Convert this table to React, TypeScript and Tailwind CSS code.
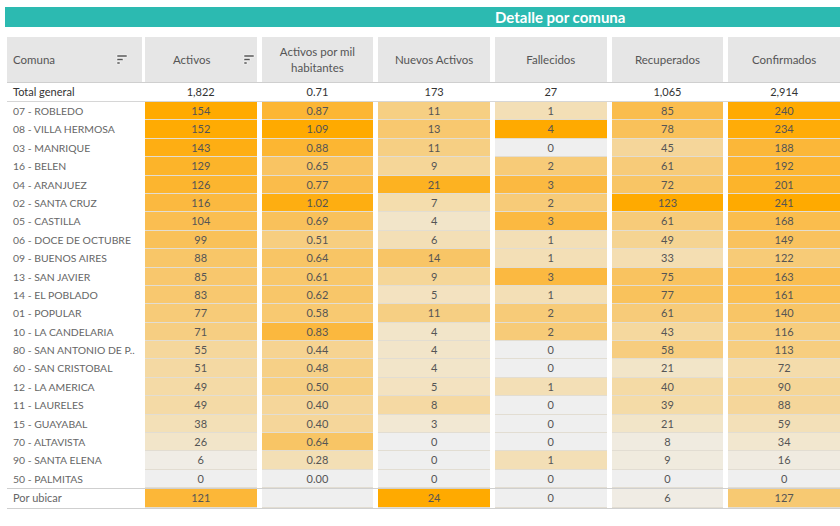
import React from "react";

type Row = { name: string; v: (number | null)[] };

const rows: Row[] = [
  { name: "07 - ROBLEDO", v: [154, 0.87, 11, 1, 85, 240] },
  { name: "08 - VILLA HERMOSA", v: [152, 1.09, 13, 4, 78, 234] },
  { name: "03 - MANRIQUE", v: [143, 0.88, 11, 0, 45, 188] },
  { name: "16 - BELEN", v: [129, 0.65, 9, 2, 61, 192] },
  { name: "04 - ARANJUEZ", v: [126, 0.77, 21, 3, 72, 201] },
  { name: "02 - SANTA CRUZ", v: [116, 1.02, 7, 2, 123, 241] },
  { name: "05 - CASTILLA", v: [104, 0.69, 4, 3, 61, 168] },
  { name: "06 - DOCE DE OCTUBRE", v: [99, 0.51, 6, 1, 49, 149] },
  { name: "09 - BUENOS AIRES", v: [88, 0.64, 14, 1, 33, 122] },
  { name: "13 - SAN JAVIER", v: [85, 0.61, 9, 3, 75, 163] },
  { name: "14 - EL POBLADO", v: [83, 0.62, 5, 1, 77, 161] },
  { name: "01 - POPULAR", v: [77, 0.58, 11, 2, 61, 140] },
  { name: "10 - LA CANDELARIA", v: [71, 0.83, 4, 2, 43, 116] },
  { name: "80 - SAN ANTONIO DE P..", v: [55, 0.44, 4, 0, 58, 113] },
  { name: "60 - SAN CRISTOBAL", v: [51, 0.48, 4, 0, 21, 72] },
  { name: "12 - LA AMERICA", v: [49, 0.5, 5, 1, 40, 90] },
  { name: "11 - LAURELES", v: [49, 0.4, 8, 0, 39, 88] },
  { name: "15 - GUAYABAL", v: [38, 0.4, 3, 0, 21, 59] },
  { name: "70 - ALTAVISTA", v: [26, 0.64, 0, 0, 8, 34] },
  { name: "90 - SANTA ELENA", v: [6, 0.28, 0, 1, 9, 16] },
  { name: "50 - PALMITAS", v: [0, 0, 0, 0, 0, 0] },
];

const porUbicar: Row = { name: "Por ubicar", v: [121, null, 24, 0, 6, 127] };
const totals = ["1,822", "0.71", "173", "27", "1,065", "2,914"];
const maxes = [154, 1.09, 24, 4, 123, 241];

// orange-gold ramp, light gray at 0
const stops: [number, number[]][] = [
  [0, [0xef, 0xef, 0xef]],
  [0.15, [0xf2, 0xe6, 0xcd]],
  [0.3, [0xf4, 0xdc, 0xab]],
  [0.5, [0xf7, 0xcb, 0x78]],
  [0.75, [0xfb, 0xb9, 0x41]],
  [1, [0xff, 0xaa, 0x00]],
];

const heat = (t: number) => {
  for (let i = 1; i < stops.length; i++) {
    const [t1, c1] = stops[i];
    const [t0, c0] = stops[i - 1];
    if (t <= t1) {
      const k = (t - t0) / (t1 - t0);
      const c = c0.map((x, j) => Math.round(x + (c1[j] - x) * k));
      return `rgb(${c[0]},${c[1]},${c[2]})`;
    }
  }
  return "#ffaa00";
};

const fmt = (v: number | null, col: number) => {
  if (v === null) return "";
  return col === 1 ? v.toFixed(2) : String(v);
};

const SortIcon = () => (
  <svg width="12" height="11" viewBox="0 0 12 11" className="shrink-0">
    <rect x="1" y="1" width="10" height="2" fill="#555" stroke="#fff" strokeWidth="0.5" />
    <rect x="1" y="4.5" width="6" height="2" fill="#555" stroke="#fff" strokeWidth="0.5" />
    <rect x="1" y="8" width="3" height="2" fill="#555" stroke="#fff" strokeWidth="0.5" />
  </svg>
);

const headers = ["Activos", "Activos por mil habitantes", "Nuevos Activos", "Fallecidos", "Recuperados", "Confirmados"];

const DataRow = ({ row, big }: { row: Row; big?: boolean }) => (
  <div className="flex h-[18.4px]">
    <div
      className={
        big
          ? "w-[135px] pl-[6px] text-[#666] text-[11px] whitespace-nowrap leading-[18px]"
          : "w-[135px] pl-[6px] text-[#666] text-[10.4px] whitespace-nowrap leading-[18px]"
      }
    >
      {row.name}
    </div>
    <div className="flex gap-[5px] ml-[3px]">
      {row.v.map((v, i) => (
        <div
          key={i}
          className="w-[111.7px] text-center text-[#555] leading-[18px] border-b border-[#e2ddd2]"
          style={{ backgroundColor: v === null ? "#efefef" : heat(v / maxes[i]) }}
        >
          {fmt(v, i)}
        </div>
      ))}
    </div>
  </div>
);

export default function App() {
  return (
    <div className="w-[840px] h-[526px] bg-white overflow-hidden font-['Lato','Open_Sans',sans-serif] text-[11px]">
      <div className="pt-[7px] pl-[5px]">
        <div className="h-[20px] bg-[#2cbab1] text-white font-bold text-[15px] leading-[20px] pl-[490px]">
          Detalle por comuna
        </div>
      </div>

      <div className="mt-[10px] pl-[7px]">
        {/* header */}
        <div className="flex h-[46px] border-b border-[#cfcfcf]">
          <div className="w-[135px] h-[45px] bg-[#e6e6e6] flex items-center pl-[6px] pr-[14px] text-[#555] text-[11.5px]">
            <span className="flex-1">Comuna</span>
            <SortIcon />
          </div>
          <div className="flex gap-[5px] ml-[3px]">
            {headers.map((h, i) => (
              <div
                key={h}
                className="w-[111.7px] h-[45px] bg-[#e6e6e6] flex items-center text-[#555] text-[11.5px] leading-[16px]"
              >
                <span className={i === 0 ? "flex-1 text-center pr-[4px]" : "flex-1 text-center px-[8px]"}>{h}</span>
                {i === 0 && <span className="mr-[2px]"><SortIcon /></span>}
              </div>
            ))}
          </div>
        </div>

        {/* total */}
        <div className="flex h-[19px] border-b border-[#d6d6d6] text-[#333]">
          <div className="w-[135px] pl-[6px] leading-[18px]">Total general</div>
          <div className="flex gap-[5px] ml-[3px]">
            {totals.map((t) => (
              <div key={t} className="w-[111.7px] text-center leading-[18px]">
                {t}
              </div>
            ))}
          </div>
        </div>

        {rows.map((r) => (
          <DataRow key={r.name} row={r} />
        ))}

        <div className="border-t border-b border-[#cfcfcf]">
          <DataRow row={porUbicar} big />
        </div>
      </div>
    </div>
  );
}
